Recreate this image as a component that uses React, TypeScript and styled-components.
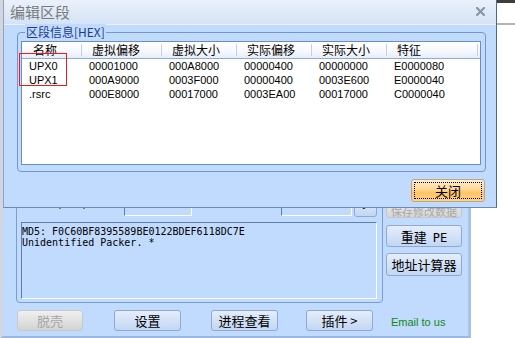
import React from "react";
import styled, { createGlobalStyle, css } from "styled-components";

const CJK = `"Noto Sans CJK SC", "Liberation Sans", sans-serif`;
const SANS = `"Liberation Sans", "Noto Sans CJK SC", sans-serif`;
const MONO = `"DejaVu Sans Mono", "Liberation Mono", monospace`;
const BODY_BG = "#c0dbfd";

const Global = createGlobalStyle`
  html, body { margin: 0; padding: 0; background: #fff; }
  body { font-family: ${SANS}; }
  * { box-sizing: border-box; }
`;

const Desktop = styled.div`
  position: relative;
  width: 515px;
  height: 338px;
  overflow: hidden;
  background: #fff;
`;

/* ---------- background main window ---------- */
const BgWindow = styled.div`
  position: absolute;
  left: 0;
  top: 0;
  width: 471px;
  height: 338px;
  background: ${BODY_BG};
  border-left: 3px solid #d3d7dd;
  border-right: 3px solid #a7c2e8;
  border-bottom: 2px solid #9cb7de;
  display: flex;
  flex-direction: column;
  padding-top: 150px;
`;

const MainRow = styled.div`
  display: flex;
  align-items: flex-start;
  gap: 3px;
  margin-left: 13px;
`;

const InfoGroup = styled.div`
  width: 367px;
  height: 153px;
  border: 1px solid #7b9dd0;
  border-radius: 4px;
  display: flex;
  flex-direction: column;
  justify-content: flex-end;
  padding: 0 5px 3px 4px;
`;

const FieldRow = styled.div`
  display: flex;
  align-items: center;
  height: 24px;
`;

const FieldLabel = styled.div<{ $w: number; $ml?: number }>`
  width: ${(p) => p.$w}px;
  margin-left: ${(p) => p.$ml ?? 0}px;
  margin-bottom: 8px;
  font: 12px ${CJK};
  line-height: 14px;
  color: #000;
  white-space: nowrap;
`;

const FieldInput = styled.div<{ $w: number }>`
  width: ${(p) => p.$w}px;
  height: 20px;
  border: 1px solid;
  border-color: #5f7fb0 #fff #fff #5f7fb0;
  font: 11px ${SANS};
  line-height: 12px;
  padding-left: 2px;
  color: #000;
`;

const blueButton = css`
  border: 1px solid #8fa9d3;
  border-radius: 3px;
  background: linear-gradient(#e4eefc 0%, #d3e2f7 50%, #c3d7f2 100%);
  color: #000;
  display: flex;
  align-items: center;
  justify-content: center;
  font: 13px ${CJK};
  white-space: nowrap;
`;

const SmallBtn = styled.div`
  ${blueButton};
  width: 23px;
  height: 21px;
  margin-left: 2px;
  font: 11px ${SANS};
`;

const Console = styled.div`
  margin-top: 4px;
  height: 77px;
  border: 1px solid;
  border-color: #5f7fb0 #fff #fff #5f7fb0;
  padding: 3px 0 0 0;
  font: 10px ${MONO};
  line-height: 11px;
  color: #000;
  white-space: pre;
`;

const RightCol = styled.div`
  width: 76px;
  padding-top: 46px;
  display: flex;
  flex-direction: column;
`;

const SideBtn = styled.div<{ $h: number; $mt?: number; $disabled?: boolean }>`
  ${blueButton};
  height: ${(p) => p.$h}px;
  margin-top: ${(p) => p.$mt ?? 0}px;
  ${(p) =>
    p.$disabled &&
    css`
      background: linear-gradient(#eeeeee, #d6d6d6);
      border-color: #c6c6c6;
      color: #a8a8a8;
      font-size: 11px;
      align-items: flex-start;
      padding-top: 6px;
    `}
`;

const PE = styled.span`
  font: 12px ${MONO};
  margin-left: 6px;
`;

const BottomRow = styled.div`
  display: flex;
  align-items: center;
  height: 20px;
  margin-top: 7px;
  margin-left: 14px;
`;

const BarBtn = styled.div<{ $w: number; $ml?: number; $disabled?: boolean }>`
  ${blueButton};
  width: ${(p) => p.$w}px;
  height: 21px;
  margin-left: ${(p) => p.$ml ?? 0}px;
  ${(p) =>
    p.$disabled &&
    css`
      background: linear-gradient(#efefef 0%, #e2e2e2 50%, #d2d2d2 100%);
      border-color: #c8c8c8;
      color: #a6a6a6;
    `}
`;

const EmailLink = styled.div`
  margin-left: 18px;
  font: 11px ${SANS};
  color: #108a10;
  padding-top: 4px;
`;

const PeekWindow = styled.div`
  position: absolute;
  left: 471px;
  top: 0;
  width: 44px;
  height: 25px;
  border-top: 3px solid #3e3e3e;
  border-bottom: 2px solid #b4b4b4;
  background: #fff;
`;

/* ---------- dialog ---------- */
const Dialog = styled.div`
  position: absolute;
  left: 3px;
  top: 0;
  width: 494px;
  height: 208px;
  background: ${BODY_BG};
  border: 1px solid #8ea3c2;
  border-right-color: #47689a;
  border-bottom-color: #6f88b0;
  border-top: none;
  display: flex;
  flex-direction: column;
`;

const TitleBar = styled.div`
  height: 25px;
  display: flex;
  align-items: center;
  justify-content: space-between;
  padding: 0 11px 1px 6px;
  background: linear-gradient(#eaf1fb, #d5e3f6);
  border-bottom: 1px solid #e9f1fc;
`;

const Title = styled.div`
  font: 15px ${CJK};
  color: #7a7a7a;
`;

const CloseGlyph = () => (
  <svg width="9" height="9" viewBox="0 0 9 9">
    <path d="M1 1 L8 8 M8 1 L1 8" stroke="#8a96a8" strokeWidth="2.2" strokeLinecap="square" />
  </svg>
);

const DialogBody = styled.div`
  display: flex;
  flex-direction: column;
  padding: 7px 10px 0 13px;
`;

const SectionGroup = styled.div`
  position: relative;
  height: 140px;
  border: 1px solid #7396cb;
  border-radius: 4px;
  padding: 8px 4px 6px 3px;
`;

const Legend = styled.div`
  position: absolute;
  left: 7px;
  top: -9px;
  padding: 0 1px;
  background: ${BODY_BG};
  font: 12px ${CJK};
  line-height: 16px;
  color: #1c3d8c;
`;

const List = styled.div`
  height: 124px;
  border: 1px solid #6d8cbe;
  background: #fff;
  overflow: hidden;
`;

const COLS = "60px 80px 75px 75px 75px 91px";

const HeaderRow = styled.div`
  display: grid;
  grid-template-columns: ${COLS};
  height: 17px;
  border-bottom: 1px solid #8eaad6;
  background: linear-gradient(#ffffff 0%, #f6f8fc 60%, #e6edf8 100%);
`;

const HeaderCell = styled.div<{ $first?: boolean }>`
  position: relative;
  padding-left: ${(p) => (p.$first ? 11 : 10)}px;
  font: 12px ${CJK};
  line-height: 16px;
  color: #000;
  white-space: nowrap;
  &::after {
    content: "";
    position: absolute;
    right: 0;
    top: 2px;
    bottom: 2px;
    width: 1px;
    background: #c3d1e6;
  }
`;

const DataRow = styled.div`
  display: grid;
  grid-template-columns: ${COLS};
  height: 14px;
`;

const DataCell = styled.div`
  padding-left: 7px;
  font: 11px ${SANS};
  line-height: 14px;
  color: #000;
  white-space: nowrap;
`;

const Annotation = styled.div`
  position: absolute;
  left: 1px;
  top: 20px;
  width: 48px;
  height: 33px;
  border: 1px solid #f01818;
  pointer-events: none;
`;

const FooterRow = styled.div`
  display: flex;
  justify-content: flex-end;
  margin-top: 7px;
  padding-right: 1px;
`;

const OrangeButton = styled.div`
  position: relative;
  width: 74px;
  height: 23px;
  border: 1px solid #b6a78c;
  border-radius: 3px;
  background: linear-gradient(#ffefcb 0%, #ffd896 45%, #ffc36a 60%, #ffd282 100%);
  display: flex;
  align-items: center;
  justify-content: center;
  font: 13px ${CJK};
  color: #000;
  &::after {
    content: "";
    position: absolute;
    inset: 2px;
    border: 1px dotted #000;
  }
`;

const sections = [
  ["UPX0", "00001000", "000A8000", "00000400", "00000000", "E0000080"],
  ["UPX1", "000A9000", "0003F000", "00000400", "0003E600", "E0000040"],
  [".rsrc", "000E8000", "00017000", "0003EA00", "00017000", "C0000040"],
];

const headers = ["名称", "虚拟偏移", "虚拟大小", "实际偏移", "实际大小", "特征"];

export default function App() {
  return (
    <>
      <Global />
      <Desktop>
        <BgWindow>
          <MainRow>
            <InfoGroup>
              <FieldRow>
                <FieldLabel $w={103}>入口点(RVA):</FieldLabel>
                <FieldInput $w={68}>000EF440</FieldInput>
                <FieldLabel $w={74} $ml={15}>子系统:</FieldLabel>
                <FieldInput $w={71}>Win32 GUI</FieldInput>
                <SmallBtn>&gt;</SmallBtn>
              </FieldRow>
              <Console>
                {"MD5: F0C60BF8395589BE0122BDEF6118DC7E\nUnidentified Packer. *"}
              </Console>
            </InfoGroup>
            <RightCol>
              <SideBtn $h={22} $disabled>保存修改数据</SideBtn>
              <SideBtn $h={22} $mt={7}>
                <span>
                  重建<PE>PE</PE>
                </span>
              </SideBtn>
              <SideBtn $h={23} $mt={6}>地址计算器</SideBtn>
            </RightCol>
          </MainRow>
          <BottomRow>
            <BarBtn $w={66} $disabled>脱壳</BarBtn>
            <BarBtn $w={67} $ml={31}>设置</BarBtn>
            <BarBtn $w={67} $ml={30}>进程查看</BarBtn>
            <BarBtn $w={67} $ml={28}>插件 &gt;</BarBtn>
            <EmailLink>Email to us</EmailLink>
          </BottomRow>
        </BgWindow>
        <PeekWindow />
        <Dialog>
          <TitleBar>
            <Title>编辑区段</Title>
            <CloseGlyph />
          </TitleBar>
          <DialogBody>
            <SectionGroup>
              <Legend>区段信息[HEX]</Legend>
              <List>
                <HeaderRow>
                  {headers.map((h, i) => (
                    <HeaderCell key={h} $first={i === 0}>
                      {h}
                    </HeaderCell>
                  ))}
                </HeaderRow>
                {sections.map((row) => (
                  <DataRow key={row[0]}>
                    {row.map((c, i) => (
                      <DataCell key={i}>{c}</DataCell>
                    ))}
                  </DataRow>
                ))}
              </List>
              <Annotation />
            </SectionGroup>
            <FooterRow>
              <OrangeButton>关闭</OrangeButton>
            </FooterRow>
          </DialogBody>
        </Dialog>
      </Desktop>
    </>
  );
}
